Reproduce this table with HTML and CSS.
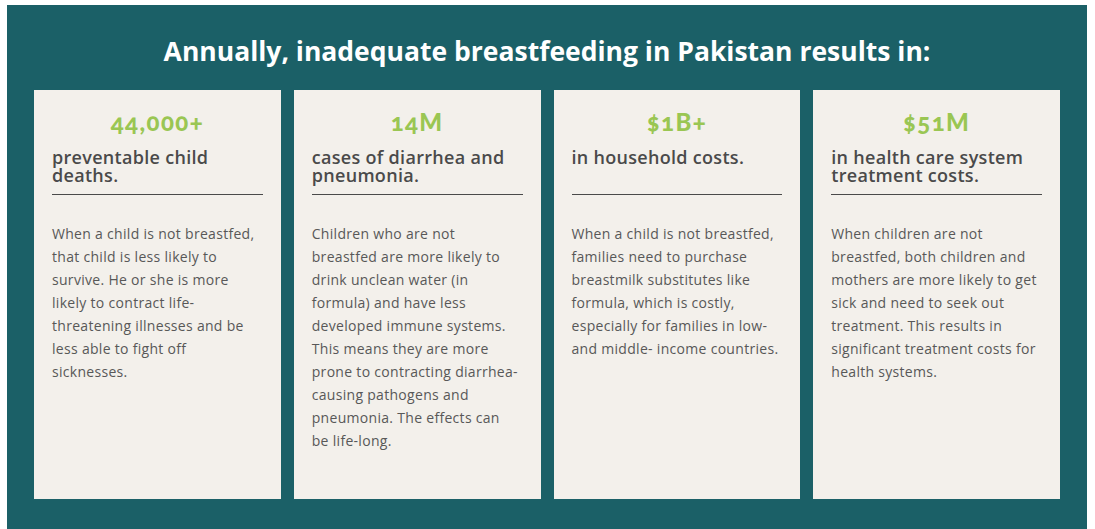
FILE: index.html
```html
<!DOCTYPE html>
<html lang="en">
<head>
<meta charset="utf-8">
<title>Breastfeeding in Pakistan</title>
<link rel="stylesheet" href="styles.css">
</head>
<body>
<section class="panel">
  <h1 class="title">Annually, inadequate breastfeeding in Pakistan results in:</h1>
  <div class="cards">
    <article class="card">
      <div class="stat">44,000+</div>
      <h2 class="label">preventable child deaths.</h2>
      <p class="desc">When a child is not breastfed,<br>that child is less likely to<br>survive. He or she is more<br>likely to contract life-<br>threatening illnesses and be<br>less able to fight off<br>sicknesses.</p>
    </article>
    <article class="card">
      <div class="stat">14M</div>
      <h2 class="label">cases of diarrhea and pneumonia.</h2>
      <p class="desc">Children who are not<br>breastfed are more likely to<br>drink unclean water (in<br>formula) and have less<br>developed immune systems.<br>This means they are more<br>prone to contracting diarrhea-<br>causing pathogens and<br>pneumonia. The effects can<br>be life-long.</p>
    </article>
    <article class="card">
      <div class="stat">$1B+</div>
      <h2 class="label">in household costs.</h2>
      <p class="desc">When a child is not breastfed,<br>families need to purchase<br>breastmilk substitutes like<br>formula, which is costly,<br>especially for families in low-<br>and middle- income countries.</p>
    </article>
    <article class="card">
      <div class="stat">$51M</div>
      <h2 class="label">in health care system treatment costs.</h2>
      <p class="desc">When children are not<br>breastfed, both children and<br>mothers are more likely to get<br>sick and need to seek out<br>treatment. This results in<br>significant treatment costs for<br>health systems.</p>
    </article>
  </div>
</section>
</body>
</html>
```

FILE: styles.css
```css
html, body {
  background: #ffffff;
}
body {
  margin: 5px 8px 0 7px;
  overflow: hidden;
}
.panel {
  width: 1080px;
  height: 530px;
  background: #1b6067;
  box-sizing: border-box;
  padding: 31px 27px 0 27px;
}
.title {
  margin: 0;
  text-align: center;
  font-family: "Open Sans", sans-serif;
  font-weight: 700;
  font-size: 26.5px;
  line-height: 30px;
  color: #ffffff;
}
.cards {
  margin-top: 24px;
  display: grid;
  grid-template-columns: repeat(4, 1fr);
  column-gap: 13px;
}
.card {
  background: #f3f0eb;
  height: 409px;
  box-sizing: border-box;
  padding: 18px 18px 0 18px;
}
.stat {
  text-align: center;
  font-family: "Lato", sans-serif;
  font-weight: 900;
  font-size: 24px;
  line-height: 28px;
  letter-spacing: 1.4px;
  color: #9ac653;
  font-variant-numeric: oldstyle-nums;
  font-feature-settings: "onum" 1;
}
.label {
  margin: 12px 0 0 0;
  padding-bottom: 10px;
  min-height: 36px;
  border-bottom: 1px solid #4a4a4a;
  font-family: "Open Sans", sans-serif;
  font-weight: 600;
  font-size: 18px;
  line-height: 18px;
  letter-spacing: 0.3px;
  color: #4a4a4a;
}
.desc {
  margin: 27px 0 0 0;
  font-family: "Open Sans", sans-serif;
  font-size: 14px;
  line-height: 23px;
  letter-spacing: 0.3px;
  color: #585858;
}
```
